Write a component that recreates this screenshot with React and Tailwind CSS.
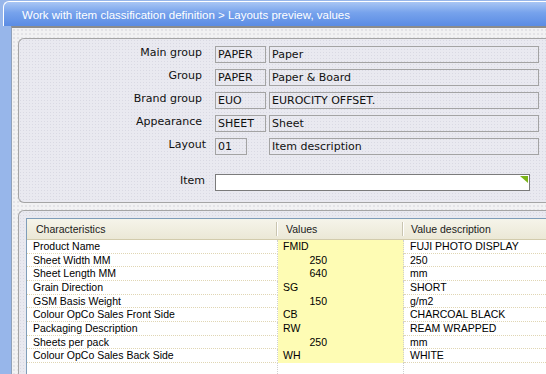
import React from "react";

const headerFields = [
  { label: "Main group", code: "PAPER", desc: "Paper" },
  { label: "Group", code: "PAPER", desc: "Paper & Board" },
  { label: "Brand group", code: "EUO", desc: "EUROCITY OFFSET." },
  { label: "Appearance", code: "SHEET", desc: "Sheet" },
];

const rows = [
  { name: "Product Name", value: "FMID", desc: "FUJI PHOTO DISPLAY" },
  { name: "Sheet Width MM", value: "250", desc: "250", num: true },
  { name: "Sheet Length MM", value: "640", desc: "mm", num: true },
  { name: "Grain Direction", value: "SG", desc: "SHORT" },
  { name: "GSM Basis Weight", value: "150", desc: "g/m2", num: true },
  { name: "Colour OpCo Sales Front Side", value: "CB", desc: "CHARCOAL BLACK" },
  { name: "Packaging Description", value: "RW", desc: "REAM WRAPPED" },
  { name: "Sheets per pack", value: "250", desc: "mm", num: true },
  { name: "Colour OpCo Sales Back Side", value: "WH", desc: "WHITE" },
];

const Box = ({ width, children }) => (
  <div
    className={`${width} h-[17px] shrink-0 border border-[#a3a3a3] pl-[2px] leading-[15px] whitespace-nowrap overflow-hidden`}
  >
    {children}
  </div>
);

const App = () => {
  return (
    <div className="w-[546px] h-[374px] overflow-hidden bg-[#97b6ea] flex flex-col font-['DejaVu_Sans',Verdana,sans-serif] text-[11px] text-[#111]">
      {/* Title bar */}
      <div className="ml-[3px] mt-[1px] h-[25px] shrink-0 rounded-tl-[6px] border-l border-t border-white bg-[linear-gradient(#a9c6f4,#76a2ec_45%,#5b8ce4)] pl-[18px] pt-[3px] text-[11.5px] leading-[20px] text-white font-['Liberation_Sans',Arial,sans-serif] whitespace-nowrap">
        Work with item classification definition &gt; Layouts preview, values
      </div>

      {/* Content */}
      <div className="flex-1 min-h-0 ml-[11px] border-l border-l-[#8fa0b8] border-t-2 border-t-[#8c8c8c] bg-[#f2f2f3] bg-[radial-gradient(circle,#e2e2e6_0.7px,transparent_0.8px)] bg-[length:4px_4px] pl-[6px] pt-[10px] flex flex-col">
        {/* Top panel */}
        <div className="w-[560px] shrink-0 border-l border-t border-b border-[#a5a5a5] rounded-tl-[6px] rounded-bl-[6px] bg-[#e9e9f0] bg-[radial-gradient(circle,#d9d9e3_0.7px,transparent_0.8px)] bg-[length:3px_3px] pt-[7px] pb-[11px]">
          <div className="flex flex-col gap-[6px]">
            {headerFields.map((f) => (
              <div key={f.label} className="flex items-start">
                <div className="w-[187px] pr-[4px] text-right leading-[14px]">{f.label}</div>
                <div className="ml-[9px] flex gap-[3px]">
                  <Box width="w-[51px]">{f.code}</Box>
                  <Box width="w-[270px]">{f.desc}</Box>
                </div>
              </div>
            ))}
            <div className="flex items-start">
              <div className="w-[187px] text-right leading-[14px]">Layout</div>
              <div className="ml-[9px] flex">
                <Box width="w-[32px]">01</Box>
                <div className="ml-[22px]">
                  <Box width="w-[270px]">Item description</Box>
                </div>
              </div>
            </div>
          </div>
          <div className="mt-[19px] flex items-start">
            <div className="w-[187px] pr-[1px] text-right leading-[14px]">Item</div>
            <div className="ml-[9px] relative w-[315px] h-[17px] border border-[#7b7b7b] bg-white">
              <svg className="absolute right-[1px] top-[1px]" width="8" height="7" viewBox="0 0 8 7">
                <polygon points="0,0 8,0 8,7" fill="#7cb518" />
              </svg>
            </div>
          </div>
        </div>

        {/* Bottom panel */}
        <div className="mt-[7px] flex-1 min-h-0 w-[560px] border-l border-t border-[#a5a5a5] rounded-tl-[6px] bg-[#e9e9f0] bg-[radial-gradient(circle,#d9d9e3_0.7px,transparent_0.8px)] bg-[length:3px_3px] pl-[7px] pt-[7px] flex flex-col">
          <div className="flex-1 min-h-0 flex flex-col bg-white border-l border-t border-[#7f9db9] font-['Liberation_Sans',Arial,sans-serif] text-[10.5px] text-black whitespace-nowrap">
            {/* Header */}
            <div className="h-[21px] shrink-0 flex border-b border-[#d2cbac] bg-[linear-gradient(#f5f4ea,#ebe8d6)] leading-[20px] text-[#1a1a1a]">
              <div className="w-[251px] flex items-center pl-[9px]">
                <span>Characteristics</span>
                <span className="ml-auto h-[14px] w-[2px] border-l border-l-[#c9c5b0] border-r border-r-white" />
              </div>
              <div className="w-[126px] flex items-center pl-[8px]">
                <span>Values</span>
                <span className="ml-auto h-[14px] w-[2px] border-l border-l-[#c9c5b0] border-r border-r-white" />
              </div>
              <div className="flex-1 pl-[7px]">Value description</div>
            </div>

            {/* Rows */}
            {rows.map((r) => (
              <div key={r.name} className="h-[13.67px] shrink-0 flex leading-[12px]">
                <div className="w-[251px] border-r border-dotted border-r-[#cfcfcf] border-b border-b-[#e0d6b4] pl-[6px]">
                  {r.name}
                </div>
                <div className="w-[126px] bg-[#fefcb4] border-r border-dotted border-r-[#cfcfcf] pl-[5px]">
                  {r.num ? (
                    <div className="w-[44px] text-right">{r.value}</div>
                  ) : (
                    r.value
                  )}
                </div>
                <div className="flex-1 border-b border-dotted border-b-[#e0d6b4] pl-[6px]">{r.desc}</div>
              </div>
            ))}

            {/* Empty space */}
            <div className="flex-1 flex">
              <div className="w-[251px] border-r border-dotted border-r-[#cfcfcf]" />
              <div className="w-[126px] border-r border-dotted border-r-[#cfcfcf]" />
              <div className="flex-1" />
            </div>
          </div>
        </div>
      </div>
    </div>
  );
};

export default App;
